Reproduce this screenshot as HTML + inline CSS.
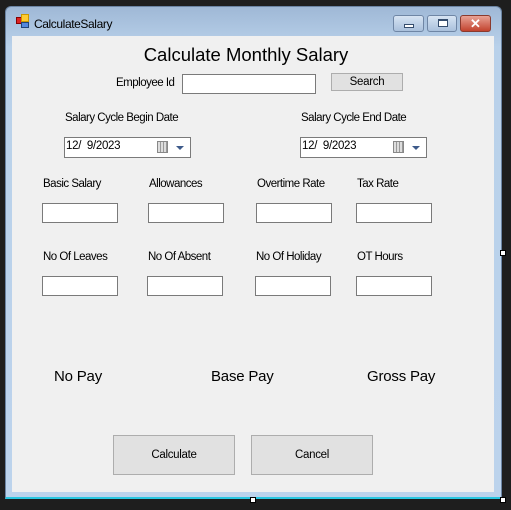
<!DOCTYPE html>
<html><head><style>
*{margin:0;padding:0;box-sizing:border-box}
body{width:511px;height:510px;background:#1e1e1e;position:relative;overflow:hidden;font-family:"Liberation Sans",sans-serif;font-size:12px;color:#000}
.a{position:absolute}
.frame{left:5px;top:6px;width:497px;height:493px;background:linear-gradient(#9fb8d6,#b9d1ea 40px,#bcd3ec);border-radius:6px 6px 0 0;border:1px solid #6b84a3;border-bottom:2px solid #29c6e0}
.client{left:12px;top:36px;width:482px;height:456px;background:#f0f0f0}
.tb{border:1px solid #7a7a7a;background:#fff;height:20px}
.lbl{font-size:11.5px;letter-spacing:-0.5px;white-space:nowrap}
.btn{background:#e1e1e1;border:1px solid #adadad;text-align:center;font-size:11.5px;letter-spacing:-0.3px}
.dp{border:1px solid #7a7a7a;background:#fff;height:21px;width:127px;font-size:11.5px;padding:2px 0 0 1px;letter-spacing:-0.3px}
.cal{position:absolute;right:22px;top:3px;width:11px;height:12px;border:1px solid #888;background:repeating-linear-gradient(90deg,#ddd 0 2px,#999 2px 3px)}
.arr{position:absolute;right:6px;top:8px;border-left:4px solid transparent;border-right:4px solid transparent;border-top:4px solid #3d5a8a}
.big{font-size:15px;letter-spacing:-0.2px}
</style></head><body>
<div class="a frame"></div>
<div class="a" style="left:16px;top:17px;width:6px;height:7px;background:#d22;border:1px solid #800"></div>
<div class="a" style="left:21px;top:14px;width:8px;height:8px;background:#fc3;border:1px solid #c90"></div>
<div class="a" style="left:21px;top:22px;width:8px;height:6px;background:#58d;border:1px solid #247"></div>
<div class="a lbl" style="left:34px;top:17px;font-size:12px;letter-spacing:-0.4px">CalculateSalary</div>
<div class="a" style="left:393px;top:15px;width:31px;height:17px;border:1px solid #6f86a5;border-radius:3px;background:linear-gradient(#d7e4f3,#a9c0dc)"><div class="a" style="left:10px;top:8px;width:10px;height:4px;background:#fff;border:1px solid #354d6d"></div></div>
<div class="a" style="left:427px;top:15px;width:30px;height:17px;border:1px solid #6f86a5;border-radius:3px;background:linear-gradient(#d7e4f3,#a9c0dc)"><div class="a" style="left:10px;top:3px;width:10px;height:8px;background:#fff;border:1px solid #354d6d;border-top-width:2px"></div></div>
<div class="a" style="left:460px;top:15px;width:31px;height:17px;border:1px solid #8a3a2e;border-radius:3px;background:linear-gradient(#e8a295,#c2432e);color:#fff;font-weight:bold;font-size:13px;text-align:center;line-height:15px">✕</div>
<div class="a client"></div>
<div class="a" style="left:0;width:492px;top:44px;text-align:center;font-size:18.5px">Calculate Monthly Salary</div>
<div class="a lbl" style="left:116px;top:77px">Employee Id</div>
<div class="a tb" style="left:182px;top:74px;width:134px"></div>
<div class="a btn" style="left:331px;top:73px;width:72px;height:18px;line-height:16px">Search</div>
<div class="a lbl" style="left:65px;top:112px">Salary Cycle Begin Date</div>
<div class="a lbl" style="left:301px;top:112px">Salary Cycle End Date</div>
<div class="a dp" style="left:64px;top:137px">12/&nbsp; 9/2023<div class="cal"></div><div class="arr"></div></div>
<div class="a dp" style="left:300px;top:137px">12/&nbsp; 9/2023<div class="cal"></div><div class="arr"></div></div>
<div class="a lbl" style="left:43px;top:178px">Basic Salary</div>
<div class="a lbl" style="left:149px;top:178px">Allowances</div>
<div class="a lbl" style="left:257px;top:178px">Overtime Rate</div>
<div class="a lbl" style="left:357px;top:178px">Tax Rate</div>
<div class="a tb" style="left:42px;top:203px;width:76px"></div>
<div class="a tb" style="left:148px;top:203px;width:76px"></div>
<div class="a tb" style="left:256px;top:203px;width:76px"></div>
<div class="a tb" style="left:356px;top:203px;width:76px"></div>
<div class="a lbl" style="left:43px;top:251px">No Of Leaves</div>
<div class="a lbl" style="left:148px;top:251px">No Of Absent</div>
<div class="a lbl" style="left:256px;top:251px">No Of Holiday</div>
<div class="a lbl" style="left:357px;top:251px">OT Hours</div>
<div class="a tb" style="left:42px;top:276px;width:76px"></div>
<div class="a tb" style="left:147px;top:276px;width:76px"></div>
<div class="a tb" style="left:255px;top:276px;width:76px"></div>
<div class="a tb" style="left:356px;top:276px;width:76px"></div>
<div class="a big" style="left:54px;top:368px">No Pay</div>
<div class="a big" style="left:211px;top:368px">Base Pay</div>
<div class="a big" style="left:367px;top:368px">Gross Pay</div>
<div class="a btn" style="left:113px;top:435px;width:122px;height:40px;line-height:38px">Calculate</div>
<div class="a btn" style="left:251px;top:435px;width:122px;height:40px;line-height:38px">Cancel</div>
<div class="a" style="left:250px;top:497px;width:6px;height:6px;background:#fff;border:1px solid #000"></div>
<div class="a" style="left:500px;top:497px;width:6px;height:6px;background:#fff;border:1px solid #000"></div>
<div class="a" style="left:500px;top:250px;width:6px;height:6px;background:#fff;border:1px solid #000"></div>
</body></html>
